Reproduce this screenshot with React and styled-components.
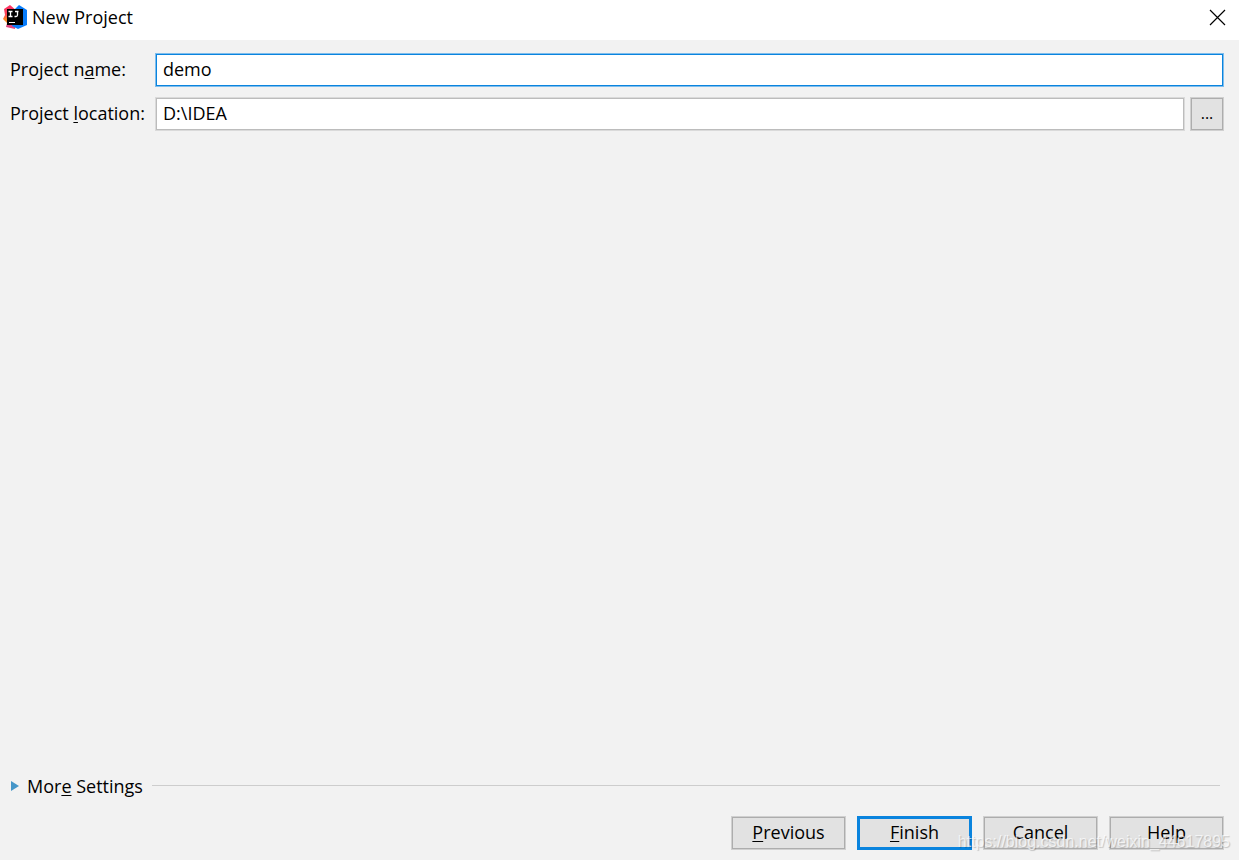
import React, { useId, useState } from "react";
import styled, { createGlobalStyle } from "styled-components";

const GlobalStyle = createGlobalStyle`
  *, *::before, *::after { box-sizing: border-box; }
  body { margin: 0; background: #f2f2f2; }
  body, button, input {
    font-family: "Open Sans", "Noto Sans", sans-serif;
    font-size: 18px;
    line-height: 24px;
    color: #000;
  }
`;

const Dialog = styled.main`
  position: relative;
  display: flex;
  flex-direction: column;
  min-height: 100vh;
  background: #f2f2f2;
`;

const TitleBar = styled.header`
  display: flex;
  align-items: flex-start;
  height: 40px;
  padding: 5px 13px 0 3px;
  background: #fff;
`;

const Title = styled.h1`
  flex: 1;
  margin: 0 0 0 5px;
  font-size: 18px;
  font-weight: 400;
  line-height: 24px;
`;

const CloseButton = styled.button`
  display: flex;
  padding: 4px 0;
  border: 0;
  background: none;
`;

const Form = styled.form`
  flex: 1;
  display: flex;
  flex-direction: column;
  padding: 13px 15px 10px 10px;
`;

const Fields = styled.div`
  display: grid;
  grid-template-columns: 145px 1fr;
  align-items: center;
  row-gap: 10px;
`;

const FieldLabel = styled.label`
  padding-bottom: 2px;
  white-space: nowrap;
`;

const FieldControl = styled.div`
  display: flex;
  gap: 5px;
`;

const Mnemonic = styled.span`
  text-decoration: underline;
  text-decoration-thickness: 1px;
  text-underline-offset: 2px;
  text-decoration-skip-ink: none;
`;

const TextField = styled.input`
  flex: 1;
  min-width: 0;
  height: 34px;
  padding: 0 7px 2px;
  border: 1px solid ${({ $active }) => ($active ? "#7fbdec" : "#dadada")};
  box-shadow: inset 0 0 0 1px ${({ $active }) => ($active ? "#0a84de" : "#bcbcbc")};
  background: #fff;
  outline: none;
`;

const PushButton = styled.button`
  width: ${({ $compact }) => ($compact ? "34px" : "115px")};
  height: 34px;
  padding: 0 0 2px;
  border: 1px solid ${({ $primary }) => ($primary ? "#0a84de" : "#d0d0d0")};
  box-shadow: inset 0 0 0 ${({ $primary }) => ($primary ? "2px #0a84de" : "1px #adadad")};
  background: #e2e2e2;
  font-size: ${({ $compact }) => ($compact ? "16px" : "18px")};
  text-align: center;
`;

const MoreSettings = styled.div`
  display: flex;
  align-items: center;
  gap: 9px;
  margin-top: auto;
  padding-right: 4px;
`;

const Disclosure = styled.button`
  display: flex;
  align-items: center;
  gap: 8px;
  padding: 2px 0 0;
  border: 0;
  background: none;
`;

const Rule = styled.hr`
  flex: 1;
  height: 1px;
  margin: 0;
  border: 0;
  background: #cdcdcd;
`;

const Actions = styled.div`
  display: flex;
  justify-content: flex-end;
  gap: 11px;
  margin-top: 18px;
`;

const Watermark = styled.span`
  position: absolute;
  right: 9px;
  bottom: 8px;
  font-family: "Liberation Sans", Arial, sans-serif;
  font-size: 16px;
  line-height: 20px;
  color: rgba(255, 255, 255, 0.7);
  text-shadow: 1px 1px 1px rgba(0, 0, 0, 0.2);
  pointer-events: none;
`;

function IdeaLogo() {
  return (
    <svg width="24" height="24" viewBox="0 0 24 24" aria-hidden="true">
      <defs>
        <linearGradient id="warm" x1="0" y1="0" x2="0" y2="1">
          <stop offset="0" stopColor="#fe2f67" />
          <stop offset="0.4" stopColor="#f84452" />
          <stop offset="0.6" stopColor="#fb8a26" />
          <stop offset="0.78" stopColor="#fb8a26" />
          <stop offset="0.85" stopColor="#e0457f" />
        </linearGradient>
      </defs>
      <path d="M1 4L7 0L14 6L12 24L3 22L4 18L0 14L2 10Z" fill="url(#warm)" />
      <path d="M12 4L16 0L24 5V20L15 24L9 21Z" fill="#087cfa" />
      <rect x="4" y="4" width="16" height="16" fill="#000" />
      <path d="M5.5 6.5h4M7.5 6.5v5M5.5 11.5h4M12 6.5h3.5M14.5 6.5v3.5Q14.5 11.5 13 11.5H11.5" stroke="#fff" strokeWidth="1.3" fill="none" />
      <path d="M6 17.5h6" stroke="#fff" strokeWidth="1" />
    </svg>
  );
}

export default function App() {
  const nameId = useId();
  const locationId = useId();
  const [name, setName] = useState("demo");
  const [location, setLocation] = useState("D:\\IDEA");

  return (
    <>
      <GlobalStyle />
      <Dialog>
        <TitleBar>
          <IdeaLogo />
          <Title>New Project</Title>
          <CloseButton type="button" aria-label="Close">
            <svg width="17" height="17" viewBox="0 0 17 17" aria-hidden="true">
              <path d="M1 1L16 16M16 1L1 16" stroke="#000" strokeWidth="1.2" />
            </svg>
          </CloseButton>
        </TitleBar>
        <Form onSubmit={(e) => e.preventDefault()}>
          <Fields>
            <FieldLabel htmlFor={nameId}>Project n<Mnemonic>a</Mnemonic>me:</FieldLabel>
            <FieldControl>
              <TextField id={nameId} $active value={name} onChange={(e) => setName(e.target.value)} />
            </FieldControl>
            <FieldLabel htmlFor={locationId}>Project <Mnemonic>l</Mnemonic>ocation:</FieldLabel>
            <FieldControl>
              <TextField id={locationId} value={location} onChange={(e) => setLocation(e.target.value)} />
              <PushButton type="button" $compact aria-label="Browse">...</PushButton>
            </FieldControl>
          </Fields>
          <MoreSettings>
            <Disclosure type="button" aria-expanded="false">
              <svg width="9" height="12" viewBox="0 0 9 12" aria-hidden="true">
                <path d="M1 1L9 6L1 11Z" fill="#4596c8" />
              </svg>
              <span>Mor<Mnemonic>e</Mnemonic> Settings</span>
            </Disclosure>
            <Rule />
          </MoreSettings>
          <Actions>
            <PushButton type="button"><Mnemonic>P</Mnemonic>revious</PushButton>
            <PushButton type="submit" $primary><Mnemonic>F</Mnemonic>inish</PushButton>
            <PushButton type="button">Cancel</PushButton>
            <PushButton type="button">Help</PushButton>
          </Actions>
        </Form>
        <Watermark>https://blog.csdn.net/weixin_44617895</Watermark>
      </Dialog>
    </>
  );
}
